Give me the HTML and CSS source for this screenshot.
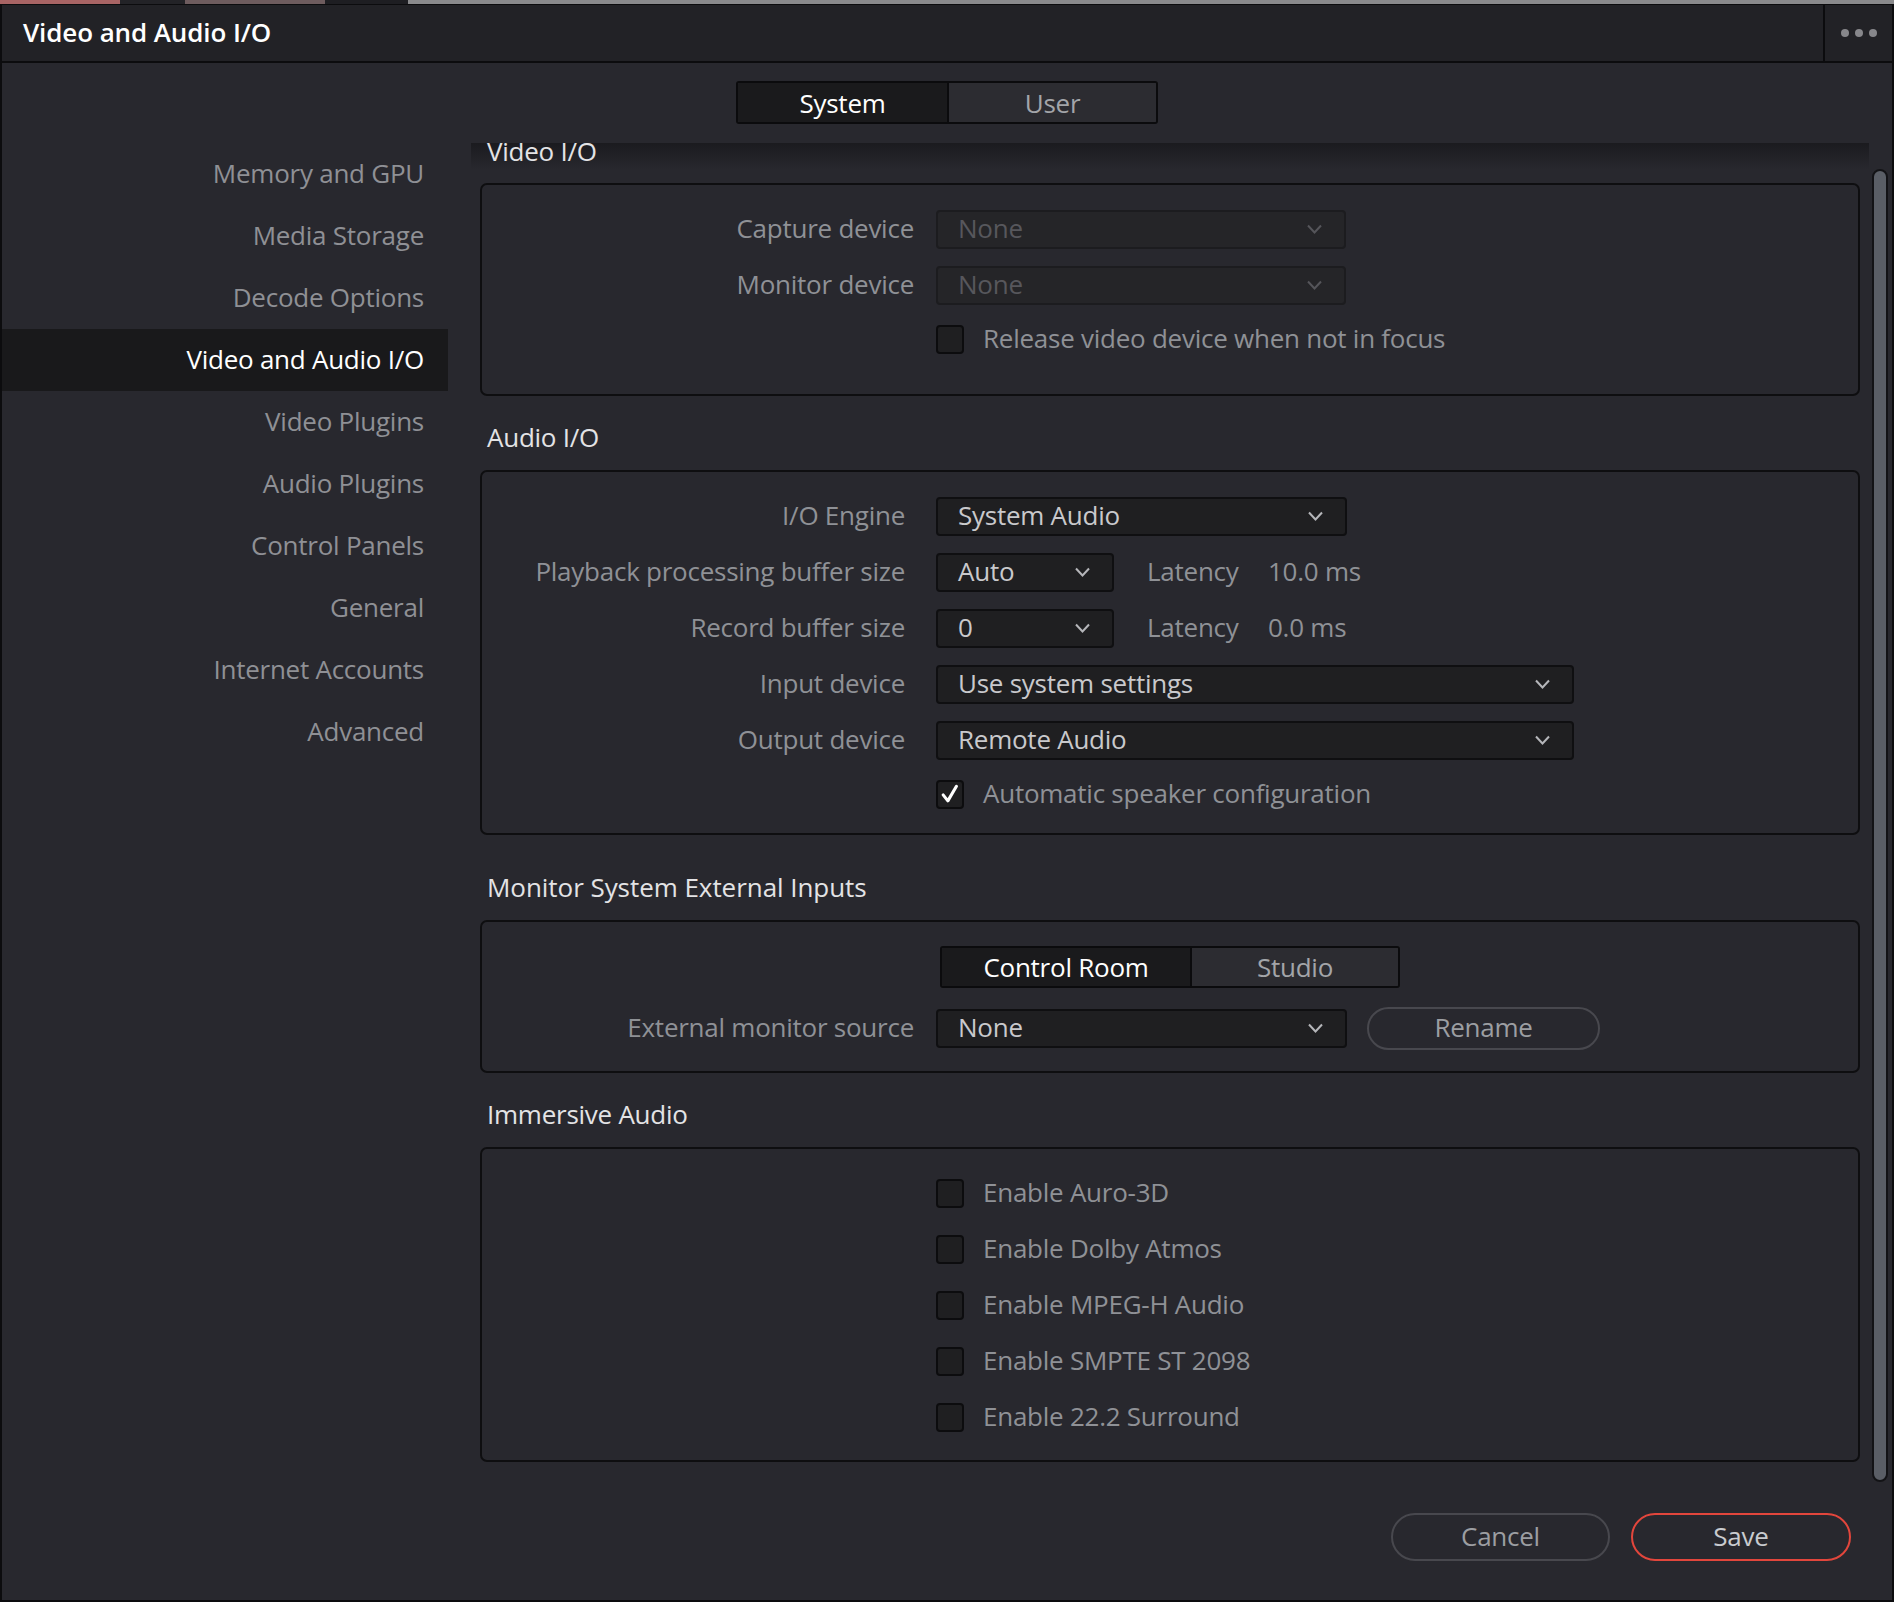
FILE: index.html
```html
<!DOCTYPE html>
<html lang="en">
<head>
<meta charset="utf-8">
<title>Video and Audio I/O</title>
<link rel="stylesheet" href="styles.css">
</head>
<body>
<div class="topstrip">
  <div class="ts ts-red"></div>
  <div class="ts ts-dark"></div>
  <div class="ts ts-pink"></div>
  <div class="ts ts-dark2"></div>
  <div class="ts ts-gray"></div>
</div>
<div class="window">
  <header class="titlebar">
    <div class="title">Video and Audio I/O</div>
    <div class="menu-btn"><span class="dot"></span><span class="dot"></span><span class="dot"></span></div>
  </header>

  <div class="tabs-row">
    <div class="seg seg-top">
      <div class="seg-item active sys">System</div>
      <div class="seg-item user">User</div>
    </div>
  </div>

  <div class="main">
    <nav class="sidebar">
      <div class="nav-item">Memory and GPU</div>
      <div class="nav-item">Media Storage</div>
      <div class="nav-item">Decode Options</div>
      <div class="nav-item selected">Video and Audio I/O</div>
      <div class="nav-item">Video Plugins</div>
      <div class="nav-item">Audio Plugins</div>
      <div class="nav-item">Control Panels</div>
      <div class="nav-item">General</div>
      <div class="nav-item">Internet Accounts</div>
      <div class="nav-item">Advanced</div>
    </nav>

    <div class="viewport">
      <div class="shade"></div>
      <div class="content">

        <div class="sec-head first">Video I/O</div>
        <div class="box box-video">
          <div class="row">
            <div class="lbl">Capture device</div>
            <div class="combo disabled w410"><span>None</span><svg class="chev" viewBox="0 0 16 10"><path d="M1.5 1.5 L8 8.5 L14.5 1.5"/></svg></div>
          </div>
          <div class="row">
            <div class="lbl">Monitor device</div>
            <div class="combo disabled w410"><span>None</span><svg class="chev" viewBox="0 0 16 10"><path d="M1.5 1.5 L8 8.5 L14.5 1.5"/></svg></div>
          </div>
          <div class="row row-check">
            <div class="lbl"></div>
            <div class="check"></div>
            <div class="check-text">Release video device when not in focus</div>
          </div>
        </div>

        <div class="sec-head">Audio I/O</div>
        <div class="box box-audio">
          <div class="row">
            <div class="lbl">I/O Engine</div>
            <div class="combo w411"><span>System Audio</span><svg class="chev" viewBox="0 0 16 10"><path d="M1.5 1.5 L8 8.5 L14.5 1.5"/></svg></div>
          </div>
          <div class="row">
            <div class="lbl">Playback processing buffer size</div>
            <div class="combo w178"><span>Auto</span><svg class="chev" viewBox="0 0 16 10"><path d="M1.5 1.5 L8 8.5 L14.5 1.5"/></svg></div>
            <div class="lat-lbl">Latency</div>
            <div class="lat-val">10.0 ms</div>
          </div>
          <div class="row">
            <div class="lbl">Record buffer size</div>
            <div class="combo w178"><span>0</span><svg class="chev" viewBox="0 0 16 10"><path d="M1.5 1.5 L8 8.5 L14.5 1.5"/></svg></div>
            <div class="lat-lbl">Latency</div>
            <div class="lat-val">0.0 ms</div>
          </div>
          <div class="row">
            <div class="lbl">Input device</div>
            <div class="combo w638"><span>Use system settings</span><svg class="chev" viewBox="0 0 16 10"><path d="M1.5 1.5 L8 8.5 L14.5 1.5"/></svg></div>
          </div>
          <div class="row">
            <div class="lbl">Output device</div>
            <div class="combo w638"><span>Remote Audio</span><svg class="chev" viewBox="0 0 16 10"><path d="M1.5 1.5 L8 8.5 L14.5 1.5"/></svg></div>
          </div>
          <div class="row row-check">
            <div class="lbl"></div>
            <div class="check checked"><svg viewBox="0 0 28 28"><path d="M6 15 L11.5 22 L21.5 5"/></svg></div>
            <div class="check-text">Automatic speaker configuration</div>
          </div>
        </div>

        <div class="sec-head wide">Monitor System External Inputs</div>
        <div class="box box-monitor">
          <div class="seg-row">
            <div class="seg seg-mon">
              <div class="seg-item active cr">Control Room</div>
              <div class="seg-item studio">Studio</div>
            </div>
          </div>
          <div class="row">
            <div class="lbl">External monitor source</div>
            <div class="combo w411"><span>None</span><svg class="chev" viewBox="0 0 16 10"><path d="M1.5 1.5 L8 8.5 L14.5 1.5"/></svg></div>
            <div class="pill rename">Rename</div>
          </div>
        </div>

        <div class="sec-head">Immersive Audio</div>
        <div class="box box-immersive">
          <div class="row row-check">
            <div class="lbl"></div>
            <div class="check"></div>
            <div class="check-text">Enable Auro-3D</div>
          </div>
          <div class="row row-check">
            <div class="lbl"></div>
            <div class="check"></div>
            <div class="check-text">Enable Dolby Atmos</div>
          </div>
          <div class="row row-check">
            <div class="lbl"></div>
            <div class="check"></div>
            <div class="check-text">Enable MPEG-H Audio</div>
          </div>
          <div class="row row-check">
            <div class="lbl"></div>
            <div class="check"></div>
            <div class="check-text">Enable SMPTE ST 2098</div>
          </div>
          <div class="row row-check">
            <div class="lbl"></div>
            <div class="check"></div>
            <div class="check-text">Enable 22.2 Surround</div>
          </div>
        </div>

      </div>
    </div>

    <div class="scrollbar"><div class="thumb"></div></div>
  </div>

  <footer class="footer">
    <div class="pill cancel">Cancel</div>
    <div class="pill save">Save</div>
  </footer>
</div>
</body>
</html>
```
FILE: styles.css
```css
* { box-sizing: border-box; }
html, body { margin: 0; padding: 0; }
body {
  width: 1894px;
  height: 1602px;
  overflow: hidden;
  background: #28282e;
  font-family: "Open Sans", "Noto Sans", sans-serif;
  font-size: 26px;
  letter-spacing: -0.25px;
  color: #8f9196;
}

/* strip of the app behind the window */
.topstrip { height: 4px; display: flex; }
.ts { height: 4px; }
.ts-red { width: 120px; background: #a86464; }
.ts-dark { width: 65px; background: #232327; }
.ts-pink { width: 140px; background: #6e5c5e; }
.ts-dark2 { width: 83px; background: #1e1e22; }
.ts-gray { flex: 1; background: #8a8a8c; }

.window {
  height: 1598px;
  border: 2px solid #0c0c0e;
  border-top-width: 1px;
  background: #28282e;
  display: flex;
  flex-direction: column;
}

/* title bar */
.titlebar {
  height: 58px;
  flex: none;
  display: flex;
  align-items: stretch;
  background: #222226;
  border-bottom: 2px solid #0c0c0e;
}
.title {
  flex: 1;
  padding-left: 21px;
  display: flex;
  align-items: center;
  color: #ffffff;
  font-weight: 600;
  font-size: 26px;
  letter-spacing: -0.1px;
  padding-bottom: 2px;
}
.menu-btn {
  width: 69px;
  border-left: 2px solid #0c0c0e;
  display: flex;
  align-items: center;
  justify-content: center;
  gap: 6px;
}
.dot { width: 8px; height: 8px; border-radius: 50%; background: #87878b; }

/* System / User */
.tabs-row {
  height: 80px;
  flex: none;
  display: flex;
  justify-content: center;
  align-items: flex-start;
  padding-top: 18px;
}
.seg {
  display: flex;
  border: 2px solid #0b0b0d;
  border-radius: 3px;
  overflow: hidden;
}
.seg-item {
  display: flex;
  align-items: center;
  justify-content: center;
  background: #2c2c31;
  color: #a3a5a9;
}
.seg-item.active { background: #1a1a1c; color: #ffffff; border-right: 2px solid #0b0b0d; }
.seg-top { height: 43px; }
.seg-top .sys { width: 211px; }
.seg-top .user { width: 207px; }

/* main area */
.main {
  height: 1339px;
  flex: none;
  display: flex;
}
.sidebar {
  width: 446px;
  flex: none;
  display: flex;
  flex-direction: column;
}
.nav-item {
  height: 62px;
  line-height: 60px;
  text-align: right;
  padding-right: 24px;
  color: #8f9095;
}
.nav-item.selected { background: #19191b; color: #ffffff; }

.viewport {
  margin-left: 23px;
  width: 1398px;
  flex: none;
  position: relative;
  overflow: hidden;
}
.shade {
  position: absolute;
  left: 0; right: 0; top: 0;
  height: 30px;
  background: linear-gradient(#1b1b1f, rgba(40, 40, 46, 0.3) 88%, rgba(40, 40, 46, 0));
  z-index: 0;
  pointer-events: none;
}
.content { margin-top: -14px; position: relative; z-index: 1; }

.sec-head {
  height: 48px;
  line-height: 46px;
  padding-left: 16px;
  margin-bottom: 8px;
  color: #e3e3e5;
}
.sec-head.first { height: 46px; line-height: 44px; }
.sec-head.wide { letter-spacing: -0.05px; }
.box {
  margin: 0 9px;
  border: 2px solid #0e0e10;
  border-radius: 7px;
  display: flex;
  flex-direction: column;
}
.box-video { padding: 24px 0 37px; gap: 16px; margin-bottom: 18px; }
.box-audio { padding: 24px 0 21px; gap: 16px; margin-bottom: 29px; }
.box-monitor { padding: 24px 0 23px; margin-bottom: 18px; }
.box-immersive { padding: 26px 0 25px; gap: 20px; }

.row {
  height: 40px;
  display: flex;
  align-items: center;
}
.row-check { height: 36px; }
.lbl {
  width: 432px;
  margin-right: 22px;
  flex: none;
  text-align: right;
  color: #8f9196;
  white-space: nowrap;
  padding-bottom: 2px;
}
.box-audio .lbl { padding-right: 9px; }

.combo {
  height: 39px;
  flex: none;
  display: flex;
  align-items: center;
  justify-content: space-between;
  background: #1f1f21;
  border: 2px solid #0f0f11;
  border-radius: 4px;
  padding: 0 21px 2px 20px;
  color: #c9c9cc;
}
.combo.disabled { background: #252528; border-color: #1c1c1f; color: #57575c; }
.w410 { width: 410px; }
.w411 { width: 411px; }
.w178 { width: 178px; }
.w638 { width: 638px; }
.chev { width: 17px; height: 10px; margin-top: 2px; }
.chev path { fill: none; stroke: #b5b6ba; stroke-width: 2; }
.disabled .chev path { stroke: #55555a; }

.lat-lbl { margin-left: 33px; width: 121px; padding-bottom: 2px; }
.lat-val { padding-bottom: 2px; }

.check {
  width: 28px;
  height: 29px;
  flex: none;
  background: #1f1f21;
  border: 2px solid #0c0c0e;
  border-radius: 4px;
  display: flex;
  align-items: center;
  justify-content: center;
}
.check svg { width: 26px; height: 26px; }
.check svg path { fill: none; stroke: #ffffff; stroke-width: 3.6; stroke-linecap: round; stroke-linejoin: round; }
.check-text { margin-left: 19px; color: #8f9196; padding-bottom: 2px; white-space: nowrap; }

.seg-row { display: flex; justify-content: center; margin-bottom: 20px; }
.seg-mon { height: 42px; }
.seg-mon .cr { width: 250px; }
.seg-mon .studio { width: 206px; }

.pill {
  display: flex;
  align-items: center;
  justify-content: center;
  border-radius: 24px;
  border: 2px solid #48484e;
  color: #9c9ea2;
  padding-bottom: 2px;
}
.rename { margin-left: 20px; width: 233px; height: 43px; }

/* scrollbar */
.scrollbar {
  width: 23px;
  flex: none;
  padding: 26px 4px 0 3px;
}
.thumb {
  height: 100%;
  background: #5a5e66;
  border: 2px solid #131316;
  border-radius: 9px;
}

/* footer */
.footer {
  flex: 1;
  display: flex;
  justify-content: flex-end;
  align-items: flex-start;
  gap: 21px;
  padding: 31px 41px 0 0;
}
.cancel { width: 219px; height: 48px; }
.save { width: 220px; height: 48px; border-color: #e2463c; color: #c9cbcf; }
```
